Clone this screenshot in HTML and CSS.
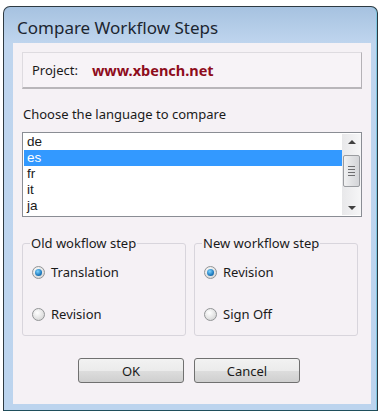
FILE: index.html
```html
<!DOCTYPE html>
<html lang="en">
<head>
    <meta charset="UTF-8">
    <title>Compare Workflow Steps</title>
    <link rel="stylesheet" href="styles.css">
</head>
<body>
    <div class="window">
        <div class="titlebar">Compare Workflow Steps</div>
        <div class="content">
            <div class="project">
                <span class="project-label">Project:</span>
                <span class="project-name">www.xbench.net</span>
            </div>

            <div class="choose">Choose the language to compare</div>
            <div class="listbox">
                <div class="items">
                    <div class="item">de</div>
                    <div class="item selected">es</div>
                    <div class="item">fr</div>
                    <div class="item">it</div>
                    <div class="item">ja</div>
                </div>
                <div class="scrollbar">
                    <span class="arrow up"></span>
                    <div class="track">
                        <div class="thumb"><span></span><span></span><span></span><span></span></div>
                    </div>
                    <span class="arrow down"></span>
                </div>
            </div>

            <div class="groups">
                <fieldset class="group">
                    <legend>Old wokflow step</legend>
                    <label class="radio"><span class="dot checked"></span>Translation</label>
                    <label class="radio"><span class="dot"></span>Revision</label>
                </fieldset>
                <fieldset class="group">
                    <legend>New workflow step</legend>
                    <label class="radio"><span class="dot checked"></span>Revision</label>
                    <label class="radio"><span class="dot"></span>Sign Off</label>
                </fieldset>
            </div>

            <div class="buttons">
                <button class="btn">OK</button>
                <button class="btn">Cancel</button>
            </div>
        </div>
    </div>
</body>
</html>
```

FILE: styles.css
```css
body {
    margin: 0;
    background: #ffffff;
    font-family: "Noto Sans", "DejaVu Sans", sans-serif;
    font-size: 13px;
    color: #1a1a1a;
}
.window {
    margin: 6px 0 0 3px;
    width: 375px;
    height: 405px;
    box-sizing: border-box;
    border: 1px solid #2e3a42;
    border-bottom-color: #1f4f5c;
    border-radius: 7px 7px 0 0;
    padding: 0 6px 6px 9px;
    background: linear-gradient(#a6c2e0, #bfd5ee 36px, #bcd4ee);
    box-shadow: inset -1px 0 0 #7fc6e0;
    display: flex;
    flex-direction: column;
}
.titlebar {
    height: 36px;
    box-sizing: border-box;
    padding: 11px 0 0 4px;
    font-size: 17px;
    line-height: 20px;
    color: #1c2530;
}
.content {
    flex: 1;
    background: #f5f1f5;
    padding: 9px 9px 0 9px;
    display: flex;
    flex-direction: column;
}
.project {
    height: 37px;
    box-sizing: border-box;
    border: 1px solid #dedbe0;
    border-right-color: #b4b1b6;
    border-bottom: 2px solid #b9b6ba;
    background: #f7f3f7;
    padding: 0 0 0 9px;
    display: flex;
    align-items: center;
    gap: 14px;
}
.project-name {
    color: #8e0c1c;
    font-weight: bold;
    font-size: 14.5px;
}
.choose {
    margin: 16px 0 0 1px;
    height: 19px;
    line-height: 19px;
}
.listbox {
    margin-top: 8px;
    height: 85px;
    box-sizing: border-box;
    border: 1px solid #8a8d94;
    background: #ffffff;
    display: flex;
    padding: 1px 0 1px 1px;
}
.items {
    flex: 1;
}
.item {
    height: 16px;
    line-height: 16px;
    padding-left: 3px;
    font-family: "Liberation Sans", Arial, sans-serif;
    font-size: 13.5px;
}
.item.selected {
    background: #3399ff;
    color: #ffffff;
}
.scrollbar {
    width: 19px;
    display: flex;
    flex-direction: column;
    background: linear-gradient(90deg, #e8e8ea, #f6f6f7);
}
.arrow {
    height: 15px;
    display: flex;
    justify-content: center;
    align-items: center;
}
.arrow::before {
    content: "";
    border-left: 4px solid transparent;
    border-right: 4px solid transparent;
}
.arrow.up::before { border-bottom: 4px solid #404040; }
.arrow.down::before { border-top: 4px solid #404040; }
.track {
    flex: 1;
    padding-top: 6px;
}
.thumb {
    height: 32px;
    box-sizing: border-box;
    margin: 0 1px 0 1px;
    border: 1px solid #9a9ca0;
    border-radius: 2px;
    background: linear-gradient(90deg, #f1f1f2, #e1e2e4 50%, #d4d5d8);
    display: flex;
    flex-direction: column;
    justify-content: center;
    align-items: center;
    gap: 2px;
}
.thumb span {
    width: 7px;
    height: 1px;
    background: #6e6e70;
}
.groups {
    margin-top: 18px;
    display: flex;
    gap: 8px;
}
.group {
    margin: 0;
    width: 164px;
    height: 101px;
    box-sizing: border-box;
    border: 1px solid #d8d5dc;
    border-radius: 3px;
    padding: 11px 0 0 9px;
    display: flex;
    flex-direction: column;
    gap: 22px;
}
.group legend {
    padding: 0 1px;
    margin-left: -2px;
    line-height: 16px;
}
.radio {
    display: flex;
    align-items: center;
    gap: 6px;
    height: 20px;
}
.dot {
    width: 13px;
    height: 13px;
    box-sizing: border-box;
    border-radius: 50%;
    border: 1px solid #929496;
    background: radial-gradient(circle at 40% 35%, #ffffff, #dcdcdc 70%, #c9c9c9);
    display: flex;
    justify-content: center;
    align-items: center;
}
.dot.checked::before {
    content: "";
    width: 7px;
    height: 7px;
    border-radius: 50%;
    background: radial-gradient(circle at 40% 35%, #7fd4ff, #1e7bbf 60%, #0c4f86);
}
.buttons {
    margin-top: 22px;
    display: flex;
    gap: 10px;
    padding-left: 56px;
}
.btn {
    width: 106px;
    height: 25px;
    border: 1px solid #707070;
    border-radius: 3px;
    background: linear-gradient(#f2f2f2, #ebebeb 50%, #dddddd 51%, #cfcfcf);
    font-family: "Noto Sans", "DejaVu Sans", sans-serif;
    font-size: 13px;
    color: #1a1a1a;
    padding: 0;
}
```
